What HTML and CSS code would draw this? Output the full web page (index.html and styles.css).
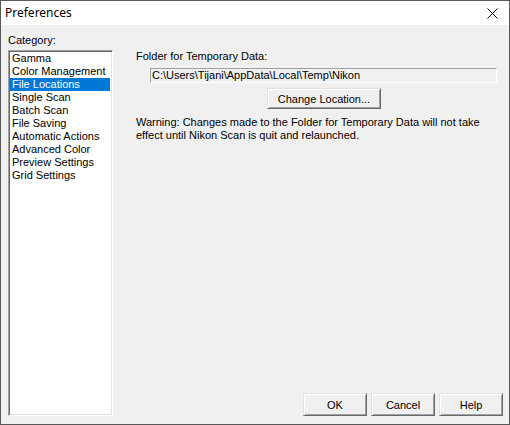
FILE: index.html
```html
<!DOCTYPE html>
<html>
<head>
<meta charset="utf-8">
<link rel="stylesheet" href="styles.css">
</head>
<body>
<div class="window">
  <div class="titlebar">
    <span class="title">Preferences</span>
    <svg class="close" width="11" height="11" viewBox="0 0 11 11"><path d="M0.5 0.5 L10.5 10.5 M10.5 0.5 L0.5 10.5" stroke="#000" stroke-width="1" fill="none"/></svg>
  </div>
  <div class="body">
    <div class="left">
      <div class="label">Category:</div>
      <div class="listbox">
        <div class="item">Gamma</div>
        <div class="item">Color Management</div>
        <div class="item selected">File Locations</div>
        <div class="item">Single Scan</div>
        <div class="item">Batch Scan</div>
        <div class="item">File Saving</div>
        <div class="item">Automatic Actions</div>
        <div class="item">Advanced Color</div>
        <div class="item">Preview Settings</div>
        <div class="item">Grid Settings</div>
      </div>
    </div>
    <div class="right">
      <div class="label">Folder for Temporary Data:</div>
      <div class="field">C:\Users\Tijani\AppData\Local\Temp\Nikon</div>
      <div class="btnrow"><div class="btn change">Change Location...</div></div>
      <div class="warning">Warning: Changes made to the Folder for Temporary Data will not take<br>effect until Nikon Scan is quit and relaunched.</div>
      <div class="buttons">
        <div class="btn">OK</div>
        <div class="btn">Cancel</div>
        <div class="btn">Help</div>
      </div>
    </div>
  </div>
</div>
</body>
</html>
```
FILE: styles.css
```css
html, body { margin: 0; padding: 0; }
body { width: 510px; height: 425px; overflow: hidden; font-family: "Liberation Sans", Arial, sans-serif; font-size: 11px; color: #000; }
.window { width: 510px; height: 425px; box-sizing: border-box; border: 1px solid #595959; background: #f0f0f0; display: flex; flex-direction: column; }
.titlebar { height: 24px; background: #fff; display: flex; align-items: center; justify-content: space-between; flex: none; }
.title { font-family: "Noto Sans", "Segoe UI", sans-serif; font-size: 12px; padding-left: 4px; line-height: 16px; }
.close { margin-right: 11px; margin-top: 1px; }
.body { flex: 1; display: flex; min-height: 0; }
.left { width: 105px; margin-left: 7px; padding-top: 9px; display: flex; flex-direction: column; }
.label { line-height: 13px; }
.listbox { margin-top: 3px; height: 366px; box-sizing: border-box; background: #fff; border: 1px solid; border-color: #a0a0a0 #fff #fff #a0a0a0; box-shadow: inset 1px 1px #696969, inset -1px -1px #e3e3e3; padding: 1px 1px; }
.item { line-height: 13px; padding-left: 2px; white-space: nowrap; margin-right: 1px; }
.item.selected { background: #0078d7; color: #fff; }
.right { flex: 1; margin-left: 23px; padding-top: 25px; display: flex; flex-direction: column; }
.field { margin: 5px 12px 0 14px; height: 15px; box-sizing: border-box; border: 1px solid; border-color: #a0a0a0 #fff #fff #a0a0a0; line-height: 13px; padding-left: 1px; white-space: nowrap; }
.btnrow { display: flex; justify-content: center; margin: 5px 12px 0 14px; }
.btn { box-sizing: border-box; height: 21px; border: 1px solid; border-color: #e3e3e3 #696969 #696969 #e3e3e3; box-shadow: inset 1px 1px #fff, inset -1px -1px #a0a0a0; display: flex; align-items: center; justify-content: center; background: #f0f0f0; }
.change { width: 114px; margin-left: 1px; }
.warning { margin-top: 7px; line-height: 13px; }
.buttons { margin-top: auto; margin-bottom: 8px; margin-right: 6px; display: flex; justify-content: flex-end; gap: 4px; }
.buttons .btn { width: 64px; height: 23px; }
```
